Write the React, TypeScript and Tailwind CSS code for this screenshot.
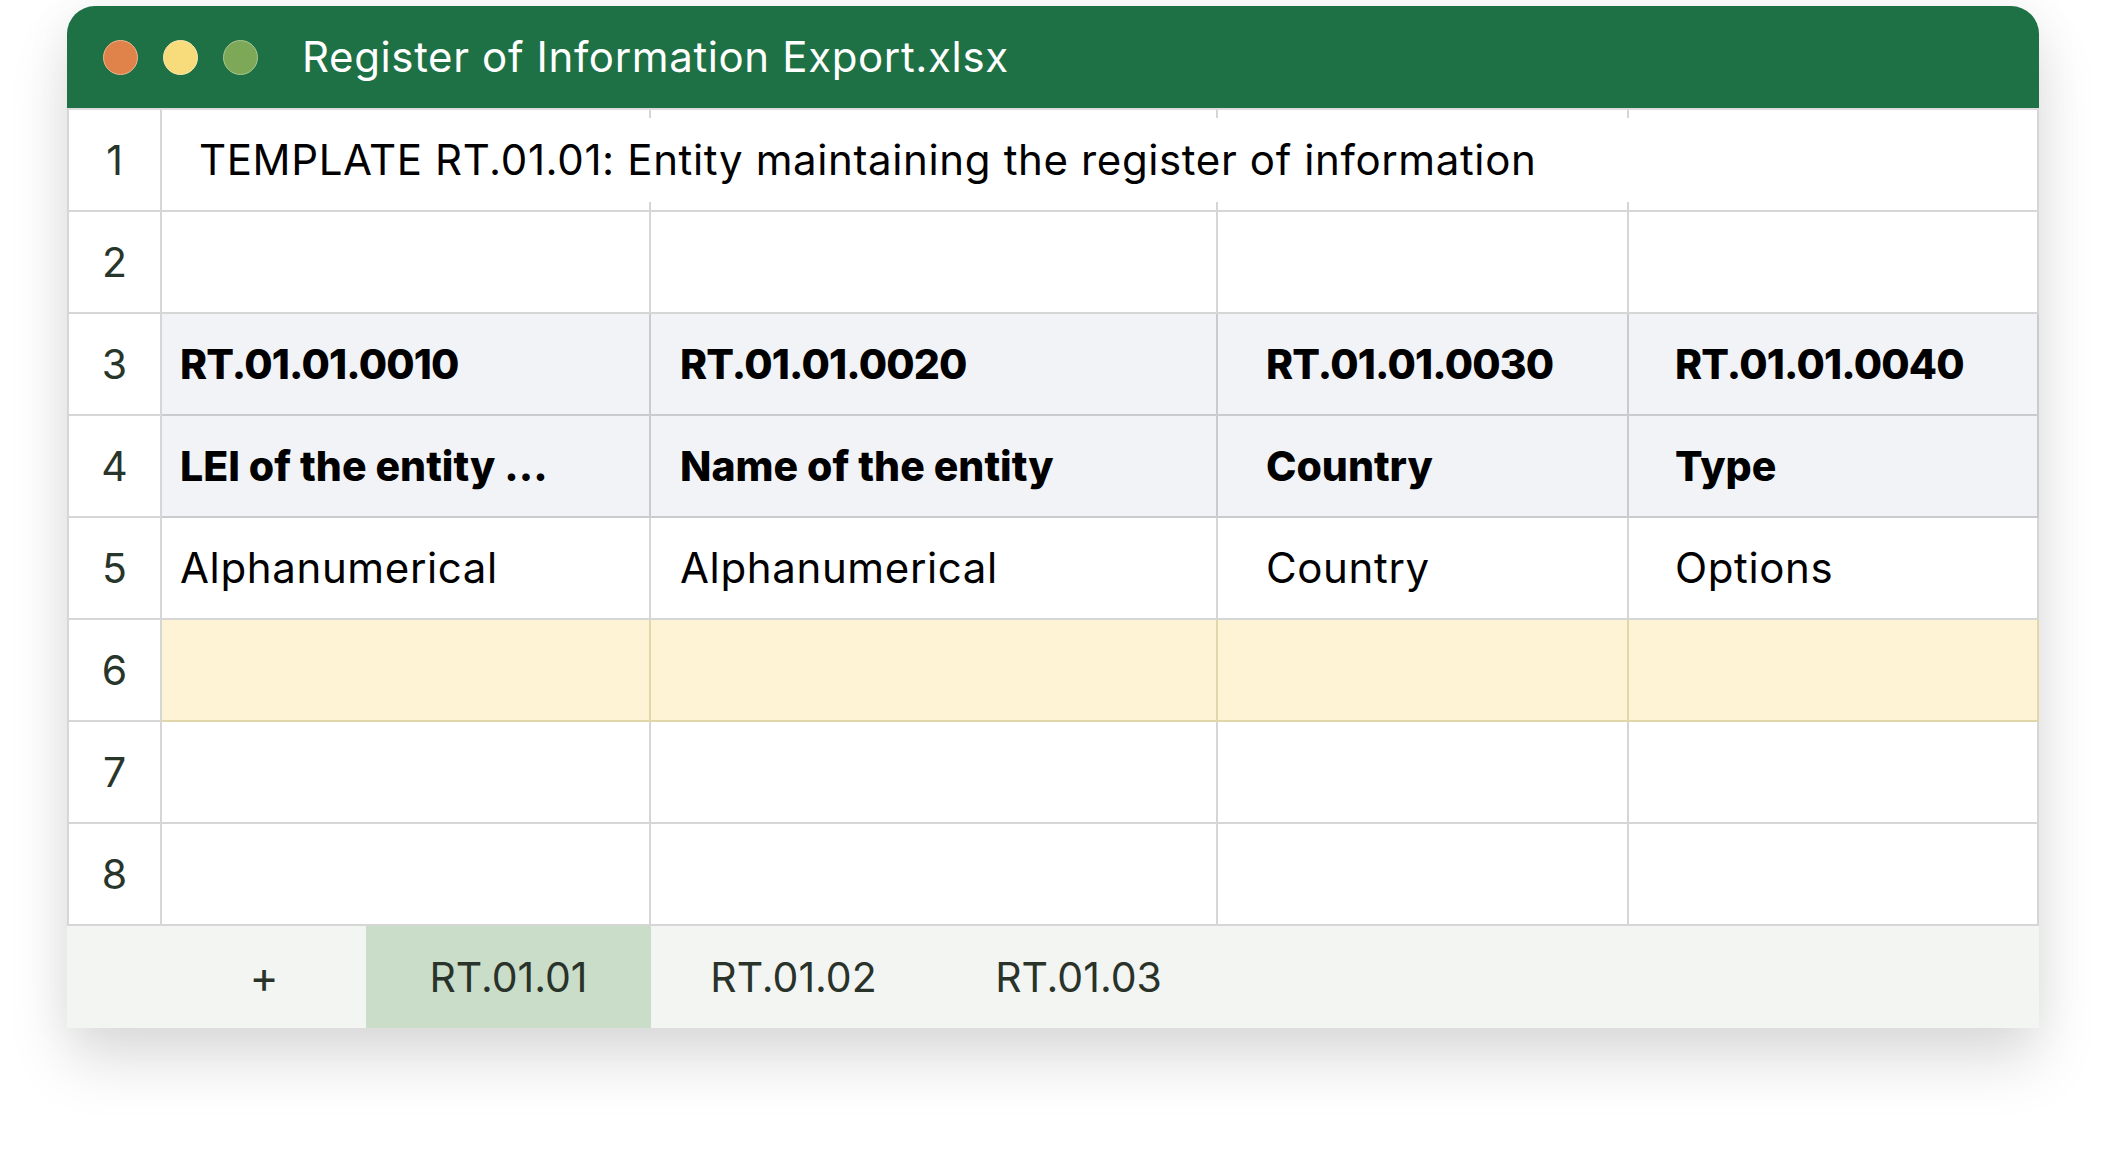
import React from 'react';

const font = "font-['Inter','Noto_Sans',sans-serif]";

const cols = ['w-[93px]', 'w-[489px]', 'w-[567px]', 'w-[411px]', 'w-[410px]'];
const pads = ['pl-[18px]', 'pl-[29px]', 'pl-[48px]', 'pl-[46px]'];

type RowKind = 'plain' | 'code' | 'head' | 'highlight';

const rows: { n: number; kind: RowKind; cells: string[] }[] = [
  { n: 2, kind: 'plain', cells: ['', '', '', ''] },
  { n: 3, kind: 'code', cells: ['RT.01.01.0010', 'RT.01.01.0020', 'RT.01.01.0030', 'RT.01.01.0040'] },
  { n: 4, kind: 'head', cells: ['LEI of the entity ...', 'Name of the entity', 'Country', 'Type'] },
  { n: 5, kind: 'plain', cells: ['Alphanumerical', 'Alphanumerical', 'Country', 'Options'] },
  { n: 6, kind: 'highlight', cells: ['', '', '', ''] },
  { n: 7, kind: 'plain', cells: ['', '', '', ''] },
  { n: 8, kind: 'plain', cells: ['', '', '', ''] },
];

const cellTone: Record<RowKind, string> = {
  plain: 'bg-white border-[#d6d6d6]',
  code: 'bg-[#f2f3f7] border-[#cacbcf] font-extrabold text-[41px] tracking-[-0.02em]',
  head: 'bg-[#f2f3f7] border-[#cacbcf] font-extrabold text-[41px] tracking-normal',
  highlight: 'bg-[#fef3d5] border-[#e2d7aa]',
};

const RowNum = ({ n }: { n: number }) => (
  <div className="w-[93px] h-[102px] shrink-0 flex items-center justify-center border-r-2 border-b-2 border-[#d6d6d6] bg-white text-[#28352b] text-[41px] tracking-normal">
    {n}
  </div>
);

export default function App() {
  return (
    <div className={`w-[2124px] h-[1152px] bg-white pl-[67px] pt-[6px] ${font} text-[42px] tracking-[0.015em] leading-none`}>
      <div className="w-[1972px] rounded-t-[28px] shadow-[0_34px_60px_rgba(0,0,0,0.13),0_0_50px_rgba(0,0,0,0.05)]">
        {/* title bar */}
        <div className="h-[102px] bg-[#1e7045] rounded-t-[28px] flex items-center pl-[36px]">
          <div className="flex gap-[25px]">
            <span className="w-[35px] h-[35px] rounded-full bg-[#e0834a] border border-[#f0b58c]" />
            <span className="w-[35px] h-[35px] rounded-full bg-[#f8db7a] border border-[#fbe9ae]" />
            <span className="w-[35px] h-[35px] rounded-full bg-[#7da858] border border-[#a9c78e]" />
          </div>
          <span className="ml-[44px] text-white">Register of Information Export.xlsx</span>
        </div>

        {/* sheet */}
        <div className="border-l-2 border-[#d6d6d6] border-t-2 border-t-[#dcdcdc]">
          <div className="flex">
            <RowNum n={1} />
            <div className="relative flex-1 h-[102px] flex items-center pl-[37px] border-r-2 border-b-2 border-[#d6d6d6] bg-white text-black whitespace-nowrap">
              TEMPLATE RT.01.01: Entity maintaining the register of information
              <span className="absolute left-[487px] top-0 w-[2px] h-[8px] bg-[#d6d6d6]" />
              <span className="absolute left-[487px] bottom-0 w-[2px] h-[8px] bg-[#d6d6d6]" />
              <span className="absolute left-[1054px] top-0 w-[2px] h-[8px] bg-[#d6d6d6]" />
              <span className="absolute left-[1054px] bottom-0 w-[2px] h-[8px] bg-[#d6d6d6]" />
              <span className="absolute left-[1465px] top-0 w-[2px] h-[8px] bg-[#d6d6d6]" />
              <span className="absolute left-[1465px] bottom-0 w-[2px] h-[8px] bg-[#d6d6d6]" />
            </div>
          </div>
          {rows.map(row => (
            <div key={row.n} className="flex">
              <RowNum n={row.n} />
              {row.cells.map((c, i) => (
                <div
                  key={i}
                  className={`${cols[i + 1]} h-[102px] shrink-0 flex items-center ${pads[i]} border-r-2 border-b-2 text-black whitespace-nowrap ${cellTone[row.kind]}`}
                >
                  {c}
                </div>
              ))}
            </div>
          ))}
        </div>

        {/* sheet tabs */}
        <div className="h-[102px] bg-[#f3f5f2] flex text-[#29332a] text-[41px] tracking-normal">
          <div className="w-[95px]" />
          <div className="w-[204px] flex items-center justify-center text-[44px]">+</div>
          <div className="w-[285px] flex items-center justify-center bg-[#c9ddc9]">RT.01.01</div>
          <div className="w-[285px] flex items-center justify-center">RT.01.02</div>
          <div className="w-[285px] flex items-center justify-center">RT.01.03</div>
        </div>
      </div>
    </div>
  );
}
